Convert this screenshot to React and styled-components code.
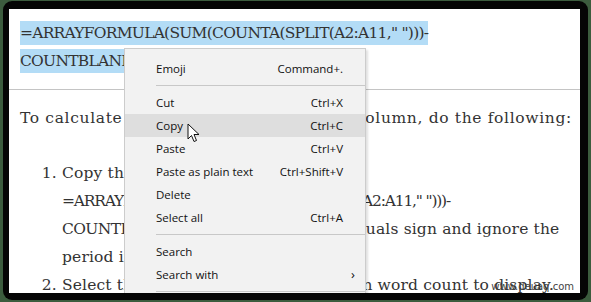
import React from "react";
import styled, { createGlobalStyle } from "styled-components";

const GlobalStyle = createGlobalStyle`
  html, body {
    margin: 0;
    padding: 0;
    background: #3c5c3e;
  }
`;

const Frame = styled.div`
  box-sizing: border-box;
  margin: 1px 0 0 3px;
  width: 585px;
  height: 299px;
  background: #050505;
  border-radius: 9px;
  padding: 8px 8px 7px 6px;
`;

const Page = styled.div`
  position: relative;
  height: 100%;
  background: #fff;
  overflow: hidden;
  font-family: "DejaVu Serif", "Liberation Serif", serif;
  font-size: 15.5px;
  line-height: 28px;
  letter-spacing: 0.65px;
  color: #333;
`;

const Formula = styled.div`
  padding: 10px 11px 0 11px;
  height: 70px;
`;

const Code = styled.span`
  letter-spacing: ${(p) => (p.$tight ? "-1.2px" : "-0.6px")};
`;

const Selected = styled.span`
  letter-spacing: -0.75px;
  background: #b3dcf6;
  padding: 3px 0 3px;
`;

const Rule = styled.hr`
  margin: 0;
  border: 0;
  border-top: 1px solid #c4c4c4;
`;

const Para = styled.p`
  margin: 14px 0 0 11px;
  white-space: nowrap;
`;

const Steps = styled.ol`
  margin: 27px 0 0;
  padding-left: 53px;
  white-space: nowrap;
  letter-spacing: 0.15px;
`;

const Menu = styled.div`
  position: absolute;
  left: 115px;
  top: 39px;
  width: 240px;
  background: #f2f2f2;
  border: 1px solid #cccccc;
  box-shadow: 2px 2px 2px rgba(0, 0, 0, 0.12);
  padding: 8px 0 0;
  font-family: "Open Sans", "Noto Sans", sans-serif;
  font-size: 11.5px;
  letter-spacing: 0;
  color: #111;
`;

const Item = styled.div`
  display: flex;
  justify-content: space-between;
  align-items: center;
  height: 23px;
  padding: 0 22px 0 31px;
  background: ${(p) => (p.$active ? "#dedede" : "transparent")};
  line-height: 23px;
`;

const Key = styled.span`
  color: #111;
`;

const Sep = styled.div`
  height: 1px;
  background: #c8c8c8;
  margin: 5px 0 5px 31px;
`;

const Chevron = styled.span`
  font-size: 13px;
  margin-right: -12px;
`;

const Cursor = styled.svg`
  position: absolute;
  left: 178px;
  top: 114px;
`;

const Watermark = styled.div`
  position: absolute;
  right: 6px;
  bottom: -8px;
  font-family: "DejaVu Sans", sans-serif;
  font-size: 10px;
  letter-spacing: 0;
  color: #444;
`;

const items = [
  ["Emoji", "Command+."],
  "sep",
  ["Cut", "Ctrl+X"],
  ["Copy", "Ctrl+C", true],
  ["Paste", "Ctrl+V"],
  ["Paste as plain text", "Ctrl+Shift+V"],
  ["Delete", ""],
  ["Select all", "Ctrl+A"],
  "sep",
  ["Search", ""],
  ["Search with", "chev"],
  "sep",
];

export default function App() {
  return (
    <>
      <GlobalStyle />
      <Frame>
        <Page>
          <Formula>
            <Selected>=ARRAYFORMULA(SUM(COUNTA(SPLIT(A2:A11," ")))-</Selected>
            <br />
            <Selected>COUNTBLANK(A2:A11))</Selected>
          </Formula>
          <Rule />
          <Para>To calculate total word count for every column, do the following:</Para>
          <Steps>
            <li>
              Copy the formula below:
              <br />
              <Code $tight>=ARRAYFORMULA(SUM(COUNTA(SPLIT(A2:A11," ")))-</Code>
              <br />
              <Code>COUNTBLANK(A2:A11))</Code> Include the equals sign and ignore the
              <br />
              period in the end.
            </li>
            <li>Select the cell where you want column word count to display.</li>
          </Steps>
          <Menu>
            {items.map((it, i) =>
              it === "sep" ? (
                <Sep key={i} />
              ) : (
                <Item key={i} $active={it[2]}>
                  <span>{it[0]}</span>
                  {it[1] === "chev" ? <Chevron>›</Chevron> : <Key>{it[1]}</Key>}
                </Item>
              )
            )}
          </Menu>
          <Cursor width="13" height="20" viewBox="0 0 13 20">
            <path
              d="M1 1 L1 16 L4.5 12.5 L7 18.5 L9.5 17.5 L7 11.5 L12 11.5 Z"
              fill="#fff"
              stroke="#111"
              strokeWidth="1"
              strokeLinejoin="round"
            />
          </Cursor>
          <Watermark>www.deuaq.com</Watermark>
        </Page>
      </Frame>
    </>
  );
}
